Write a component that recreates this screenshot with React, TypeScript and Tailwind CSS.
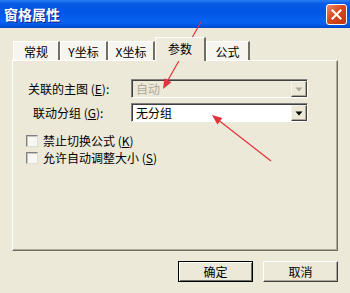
import React from "react";

const font = { fontFamily: '"Noto Sans CJK SC", "Noto Sans", sans-serif' };

function Tab({ label, w, selected }: { label: React.ReactNode; w: number; selected?: boolean }) {
  if (selected) {
    return (
      <div
        className="relative z-10 -mb-px flex h-[24px] items-start justify-center border-l border-t border-r-2 border-l-white border-t-white border-r-[#716f64] bg-[#eeebdd] pt-[3px] text-[12px] leading-[16px] text-black"
        style={{ width: w }}
      >
        {label}
      </div>
    );
  }
  return (
    <div
      className="flex h-[19px] items-start justify-center border-l border-t border-r-2 border-l-white border-t-white border-r-[#716f64] bg-[#f6f5ef] pt-[2px] text-[12px] leading-[16px] text-black"
      style={{ width: w }}
    >
      {label}
    </div>
  );
}

function DropButton({ disabled }: { disabled?: boolean }) {
  return (
    <div className="flex h-full w-[16px] items-center justify-center border border-l-[#f4f3ee] border-t-[#f4f3ee] border-r-[#404040] border-b-[#404040] bg-[#ece9d8] shadow-[inset_-1px_-1px_0_#aca899]">
      <svg width="8" height="5" viewBox="0 0 8 5">
        <polygon points="0.5,0.5 7.5,0.5 4,4.5" fill={disabled ? "#aca899" : "#000"} />
      </svg>
    </div>
  );
}

function Combo({ text, disabled }: { text: string; disabled?: boolean }) {
  return (
    <div
      className={
        "flex h-[19px] w-[177px] items-stretch border border-l-[#808080] border-t-[#808080] border-r-white border-b-white shadow-[inset_1px_1px_0_#404040] pt-px pl-px " +
        (disabled ? "bg-[#ece9d8]" : "bg-white")
      }
    >
      <div
        className={
          "flex flex-1 items-center pl-[3px] text-[12px] leading-none " +
          (disabled ? "text-[#aca899]" : "text-black")
        }
      >
        {text}
      </div>
      <DropButton disabled={disabled} />
    </div>
  );
}

function CheckRow({ children }: { children: React.ReactNode }) {
  return (
    <div className="flex h-[13px] items-center">
      <div className="h-[12px] w-[12px] border border-l-[#808080] border-t-[#808080] border-r-[#e0ded3] border-b-[#e0ded3] bg-[#f7f7f4] shadow-[inset_1px_1px_0_#c8c6bc]" />
      <div className="ml-[5px] text-[12px] leading-none text-black">{children}</div>
    </div>
  );
}

function Button({ children, isDefault }: { children: React.ReactNode; isDefault?: boolean }) {
  return (
    <div
      className={
        "flex h-[21px] w-[75px] items-center justify-center bg-[#ece9d8] text-[12px] leading-none text-black " +
        (isDefault
          ? "border border-black shadow-[inset_1px_1px_0_#fff,inset_-1px_-1px_0_#716f64]"
          : "border border-l-white border-t-white border-r-[#404040] border-b-[#404040] shadow-[inset_-1px_-1px_0_#aca899]")
      }
    >
      {children}
    </div>
  );
}

export default function App() {
  return (
    <div className="relative h-[293px] w-[350px] overflow-hidden bg-[#ece9d8]" style={font}>
      {/* Title bar */}
      <div className="flex h-[28px] items-center justify-between bg-[linear-gradient(to_bottom,#2a7ef4_0%,#0a5ce6_12%,#0055e5_40%,#0862f0_80%,#0055df_92%,#0043c4_100%)] pl-[4px] pr-[3px]">
        <div className="text-[14px] font-bold leading-none text-white [text-shadow:1px_1px_0_#0a1e8c]">
          窗格属性
        </div>
        <div className="flex h-[21px] w-[21px] items-center justify-center rounded-[3px] border border-white bg-[linear-gradient(135deg,#f08a6a,#d9491f_45%,#c0340f)]">
          <svg width="11" height="11" viewBox="0 0 11 11">
            <path d="M1.5 1.5 L9.5 9.5 M9.5 1.5 L1.5 9.5" stroke="#fff" strokeWidth="2" strokeLinecap="square" />
          </svg>
        </div>
      </div>

      {/* Body */}
      <div className="flex flex-col px-[12px]">
        {/* Tabs */}
        <div className="mt-[9px] flex h-[23px] items-end pl-px">
          <Tab label="常规" w={47} />
          <Tab label={<span>Y坐标</span>} w={48} />
          <Tab label={<span>X坐标</span>} w={47} />
          <Tab label="参数" w={51} selected />
          <Tab label="公式" w={44} />
        </div>

        {/* Panel */}
        <div className="flex h-[191px] flex-col border border-l-white border-t-white border-r-[#716f64] border-b-[#716f64] shadow-[inset_-1px_-1px_0_#aca899] pt-[18px]">
          <div className="flex items-center">
            <div className="w-[118px] pl-[15px] text-[12px] leading-none text-black">
              关联的主图 (<span className="underline">E</span>):
            </div>
            <Combo text="自动" disabled />
          </div>
          <div className="mt-[5px] flex items-center">
            <div className="w-[118px] pl-[20px] text-[12px] leading-none text-black">
              联动分组 (<span className="underline">G</span>):
            </div>
            <Combo text="无分组" />
          </div>
          <div className="mt-[12px] flex flex-col gap-[4px] pl-[13px]">
            <CheckRow>
              禁止切换公式 (<span className="underline">K</span>)
            </CheckRow>
            <CheckRow>
              允许自动调整大小 (<span className="underline">S</span>)
            </CheckRow>
          </div>
        </div>

        {/* Buttons */}
        <div className="mt-[10px] flex justify-end gap-[10px]">
          <Button isDefault>确定</Button>
          <Button>取消</Button>
        </div>
      </div>

      {/* Red annotation arrows */}
      <svg className="pointer-events-none absolute left-0 top-0" width="350" height="293" viewBox="0 0 350 293">
        <line x1="201" y1="22" x2="167.9" y2="80.3" stroke="#e4323c" strokeWidth="1.2" />
        <polygon points="163,89 171.4,82.3 164.4,78.3" fill="#e4323c" />
        <line x1="271" y1="161" x2="219.9" y2="121.2" stroke="#e4323c" strokeWidth="1.2" />
        <polygon points="212,115 222.4,118 217.4,124.4" fill="#e4323c" />
      </svg>
    </div>
  );
}
